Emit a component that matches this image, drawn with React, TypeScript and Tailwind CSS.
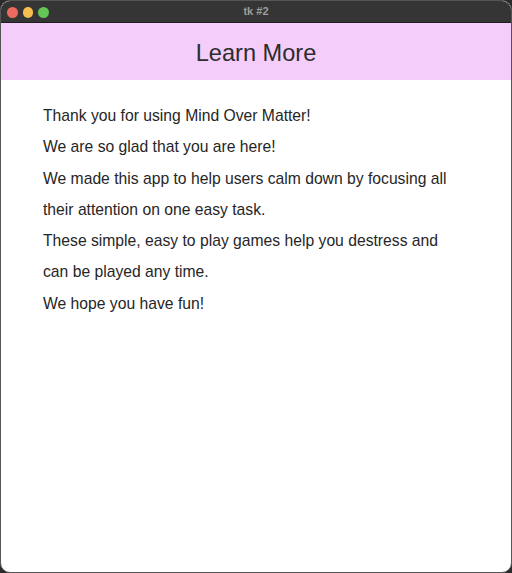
import React from "react";

const lines = [
  "Thank you for using Mind Over Matter!",
  "We are so glad that you are here!",
  "We made this app to help users calm down by focusing all",
  "their attention on one easy task.",
  "These simple, easy to play games help you destress and",
  "can be played any time.",
  "We hope you have fun!",
];

export default function App() {
  return (
    <div className="w-[512px] h-[573px] bg-[#2a2a2a] overflow-hidden">
      <div className="w-full h-full flex flex-col rounded-[10px] overflow-hidden border border-[#555] bg-white font-['Liberation_Sans',Arial,sans-serif]">
        <div className="h-[22px] shrink-0 bg-[#353535] relative flex items-center justify-center border-b border-[#1e1e1e]">
          <div className="absolute left-[6px] top-[6px] flex gap-[5px]">
            <span className="w-[10.5px] h-[10.5px] rounded-full bg-[#ee6a5f]" />
            <span className="w-[10.5px] h-[10.5px] rounded-full bg-[#f5be4f]" />
            <span className="w-[10.5px] h-[10.5px] rounded-full bg-[#62c554]" />
          </div>
          <span className="text-[11px] font-bold text-[#9d9d9d]">tk #2</span>
        </div>
        <div className="h-[57px] shrink-0 bg-[#f5cdfb] flex items-center justify-center pt-[4px]">
          <h1 className="text-[23.6px] text-[#2c2c2c] leading-none">Learn More</h1>
        </div>
        <div className="flex-1 pl-[42px] pt-[20px]">
          {lines.map((l, i) => (
            <p key={i} className="text-[15.7px] leading-[31.3px] text-[#262626]">
              {l}
            </p>
          ))}
        </div>
      </div>
    </div>
  );
}
